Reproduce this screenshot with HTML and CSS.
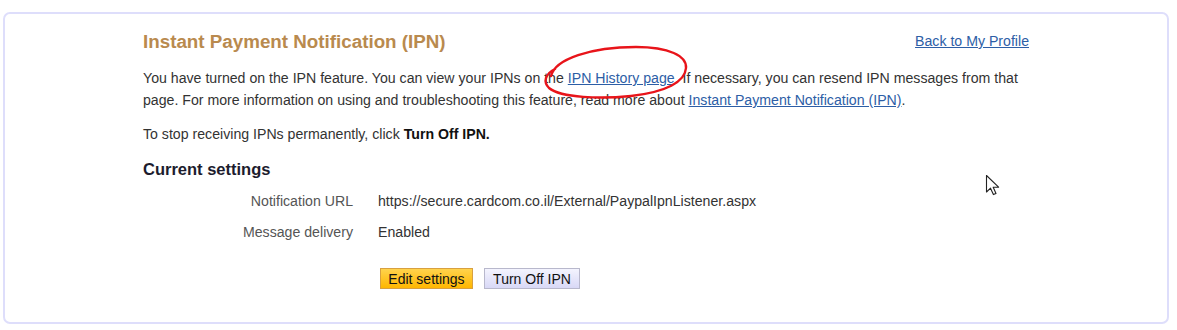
FILE: index.html
```html
<!DOCTYPE html>
<html lang="en">
<head>
    <meta charset="UTF-8">
    <title>Instant Payment Notification (IPN)</title>
    <link rel="stylesheet" href="styles.css">
</head>
<body>
    <div class="card">
        <div class="card-head">
            <h1>Instant Payment Notification (IPN)</h1>
            <a href="#" class="back-link">Back to My Profile</a>
        </div>

        <p class="intro">You have turned on the IPN feature. You can view your IPNs on the <a href="#">IPN History page</a>. If necessary, you can resend IPN messages from that page. For more information on using and troubleshooting this feature, read more about <a href="#">Instant Payment Notification (IPN)</a>.</p>

        <p class="stop">To stop receiving IPNs permanently, click <b>Turn Off IPN.</b></p>

        <h2>Current settings</h2>

        <div class="settings">
            <div class="label">Notification URL</div>
            <div class="value">https://secure.cardcom.co.il/External/PaypalIpnListener.aspx</div>
            <div class="label">Message delivery</div>
            <div class="value">Enabled</div>
        </div>

        <div class="actions">
            <button class="btn btn-primary">Edit settings</button>
            <button class="btn btn-secondary">Turn Off IPN</button>
        </div>

        <!-- hand drawn mark around the history link -->
        <svg class="scribble" width="160" height="64" viewBox="0 0 160 64">
            <path d="M10 32 C 14 15, 50 3, 95 3 C 128 3, 146 12, 145 24 C 144 38, 125 48, 90 52 C 60 55, 20 54, 8 44 C 2 38, 4 30, 14 25" fill="none" stroke="#e8141a" stroke-width="2.4" stroke-linecap="round"/>
        </svg>

        <svg class="cursor" width="16" height="24" viewBox="0 0 16 24">
            <path d="M1.5 1.5 L1.5 18 L5.5 14.2 L8.4 20.6 L11 19.4 L8.2 13.2 L13.6 13.2 Z" fill="#fff" stroke="#222" stroke-width="1.1" stroke-linejoin="round"/>
        </svg>
    </div>
</body>
</html>
```

FILE: styles.css
```css
* {
    margin: 0;
    padding: 0;
    box-sizing: border-box;
}

body {
    background: #fff;
    font-family: "Liberation Sans", Arial, sans-serif;
    font-size: 14.15px;
    color: #333;
}

.card {
    position: relative;
    margin: 12px 0 0 3px;
    width: 1166px;
    height: 312px;
    border: 2px solid #dedefb;
    border-radius: 7px;
    padding: 17px 138px 0 138px;
}

.card-head {
    display: flex;
    justify-content: space-between;
    align-items: flex-start;
}

h1 {
    font-size: 18.8px;
    line-height: 22px;
    font-weight: bold;
    color: #b98a4e;
}

.back-link {
    line-height: 20px;
    color: #2d5ea6;
}

a {
    color: #2d5ea6;
}

.intro {
    margin-top: 14px;
    line-height: 22px;
}

.stop {
    margin-top: 12px;
    line-height: 22px;
}

.stop b {
    color: #111;
}

h2 {
    margin-top: 13px;
    font-size: 16.5px;
    line-height: 22px;
    font-weight: bold;
    color: #1c1c2e;
}

.settings {
    display: grid;
    grid-template-columns: 210px auto;
    column-gap: 25px;
    row-gap: 9px;
    margin-top: 10px;
    line-height: 22px;
}

.label {
    text-align: right;
    color: #555;
}

.value {
    color: #333;
}

.actions {
    display: flex;
    gap: 11px;
    margin: 25px 0 0 237px;
}

.btn {
    font-family: "Liberation Sans", Arial, sans-serif;
    font-size: 14px;
    height: 21px;
    padding: 0 4px;
    color: #111;
}

.btn-primary {
    width: 93px;
    background: linear-gradient(to bottom, #ffd34d, #ffb600);
    border: 1px solid #d8a040;
}

.btn-secondary {
    width: 96px;
    background: linear-gradient(to bottom, #f4f4fe, #d8d8f6);
    border: 1px solid #b8b8cc;
}

.scribble {
    position: absolute;
    left: 536px;
    top: 30px;
}

.cursor {
    position: absolute;
    left: 980px;
    top: 160px;
}
```
